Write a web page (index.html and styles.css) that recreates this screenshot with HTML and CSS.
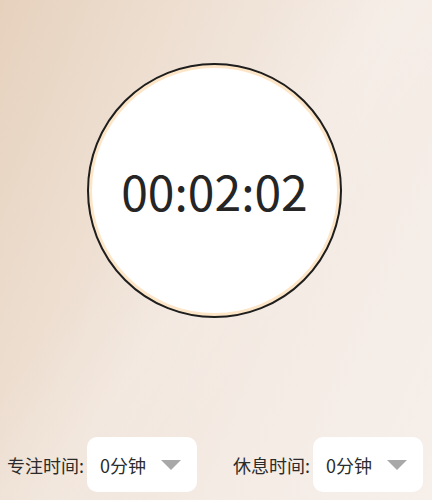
FILE: index.html
```html
<!DOCTYPE html>
<html lang="zh">
<head>
<meta charset="utf-8">
<link rel="stylesheet" href="styles.css">
</head>
<body>
<div class="page">
  <div class="timer-wrap">
    <div class="timer">
      <div class="timer-inner">00:02:02</div>
    </div>
  </div>
  <div class="settings">
    <div class="field">
      <span class="label">专注时间:</span>
      <div class="select"><span class="value">0分钟</span><span class="caret"></span></div>
    </div>
    <div class="field">
      <span class="label">休息时间:</span>
      <div class="select"><span class="value">0分钟</span><span class="caret"></span></div>
    </div>
  </div>
</div>
</body>
</html>
```
FILE: styles.css
```css
html, body {
  margin: 0;
  padding: 0;
}
body {
  width: 432px;
  height: 500px;
  overflow: hidden;
  font-family: "Noto Sans CJK SC", "Noto Sans", sans-serif;
  color: #2b2b2b;
}
.page {
  width: 432px;
  height: 500px;
  box-sizing: border-box;
  background:
    linear-gradient(125deg, rgba(255,255,255,0) 35%, rgba(255,255,255,0.15) 50%, rgba(255,255,255,0) 65%),
    linear-gradient(112deg, #e6d1bd 0%, #ecdccd 22%, #f1e5db 45%, #f4ebe4 65%, #f6efea 100%);
  display: flex;
  flex-direction: column;
  padding-top: 63px;
}
.timer-wrap {
  display: flex;
  justify-content: center;
  padding-right: 3px;
}
.timer {
  width: 255px;
  height: 255px;
  box-sizing: border-box;
  border-radius: 50%;
  border: 2px solid #1e1e1e;
  background: #fde6c8;
  padding: 3px;
}
.timer-inner {
  width: 100%;
  height: 100%;
  border-radius: 50%;
  background: #ffffff;
  display: flex;
  align-items: center;
  justify-content: center;
  font-size: 48px;
  font-weight: 400;
  line-height: 1;
  color: #252525;
  padding-bottom: 2px;
  box-sizing: border-box;
}
.settings {
  margin-top: 119px;
  display: flex;
  align-items: center;
  padding-left: 7px;
  gap: 36px;
}
.field {
  display: flex;
  align-items: center;
  gap: 5px;
}
.label {
  width: 75px;
  font-size: 18px;
  white-space: nowrap;
  color: #2b2b2b;
}
.select {
  width: 110px;
  height: 55px;
  box-sizing: border-box;
  background: #ffffff;
  border-radius: 10px;
  display: flex;
  align-items: center;
  justify-content: space-between;
  padding: 0 16px 0 13px;
}
.value {
  font-size: 18px;
  color: #2b2b2b;
}
.caret {
  width: 0;
  height: 0;
  border-left: 10.5px solid transparent;
  border-right: 10.5px solid transparent;
  border-top: 10px solid #a8a8a8;
  margin-top: 1px;
}
```
